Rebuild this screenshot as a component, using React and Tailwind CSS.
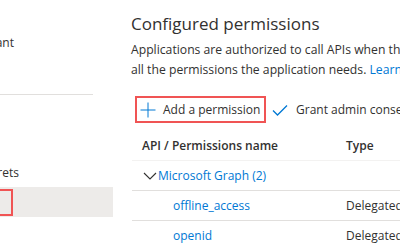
export default function App() {
  const rows = [
    { name: 'offline_access', type: 'Delegated' },
    { name: 'openid', type: 'Delegated' },
  ];

  return (
    <div className="flex h-[250px] w-[400px] overflow-hidden bg-white text-[#323130]" style={{ fontFamily: '"Open Sans", "Noto Sans", sans-serif' }}>
      {/* left nav, clipped */}
      <div className="w-[113px] shrink-0 overflow-hidden">
        <div className="flex h-[30px] mt-[28px] items-center justify-end pr-[99px] text-[12px] whitespace-nowrap">
          <span>Integration assistant</span>
        </div>
        <div className="mt-[36px] h-px w-[93px] bg-[#e1dfdd]" />
        <div className="flex h-[30px] mt-[63px] items-center justify-end pr-[94px] text-[12px] whitespace-nowrap">
          <span>Certificates &amp; secrets</span>
        </div>
        <div className="mt-[-1px] flex h-[30px] items-center bg-[#edebe9]">
          <div className="ml-[-20px] h-[27px] w-[33px] border-2 border-[#f05454]" />
        </div>
      </div>

      {/* main content */}
      <div className="min-w-0 flex-1 pl-[18px] whitespace-nowrap">
        <h2 className="mt-[12px] h-[24px] text-[17px] leading-[24px]">Configured permissions</h2>
        <p className="mt-[4px] text-[12.2px] leading-[20px]">
          Applications are authorized to call APIs when they are granted permissions by users/admins as part of the consent process.
          <br />
          all the permissions the application needs. <span className="text-[#0078d4]">Learn more about permissions and consent</span>
        </p>

        <div className="mt-[16px] flex items-center">
          <div className="ml-[4px] flex h-[27px] w-[131px] shrink-0 items-center border-2 border-[#f05454] pl-[3px]">
            <svg width="16" height="16" viewBox="0 0 16 16" className="shrink-0">
              <path d="M8 0.5v15M0.5 8h15" stroke="#0078d4" strokeWidth="1" fill="none" />
            </svg>
            <span className="ml-[7px] text-[12px]">Add a permission</span>
          </div>
          <svg width="16" height="16" viewBox="0 0 16 16" className="ml-[6px] shrink-0">
            <path d="M1 8.5l4.5 4.5L15 3.5" stroke="#0078d4" strokeWidth="1.3" fill="none" />
          </svg>
          <span className="ml-[8px] text-[12px]">Grant admin consent for Default Directory</span>
        </div>

        <div className="mt-[8px] ml-[1px]">
          <div className="flex h-[30px] items-center border-b border-[#f3f2f1] text-[12px] font-semibold">
            <div className="w-[214px] shrink-0 pl-[10px]">API / Permissions name</div>
            <div>Type</div>
          </div>
          <div className="flex h-[30px] items-center border-b border-[#e1dfdd] text-[12px]">
            <div className="flex w-[214px] shrink-0 items-center pl-[11px] text-[#0078d4]">
              <svg width="14" height="14" viewBox="0 0 14 14" className="shrink-0">
                <path d="M1 4l6 6 6-6" stroke="#323130" strokeWidth="1.1" fill="none" />
              </svg>
              <span className="ml-[1px]">Microsoft Graph (2)</span>
            </div>
          </div>
          {rows.map((r) => (
            <div key={r.name} className="flex h-[30px] items-center border-b border-[#e1dfdd] text-[12px]">
              <div className="w-[214px] shrink-0 pl-[41px] text-[#0078d4]">{r.name}</div>
              <div>{r.type}</div>
            </div>
          ))}
        </div>
      </div>
    </div>
  );
}
